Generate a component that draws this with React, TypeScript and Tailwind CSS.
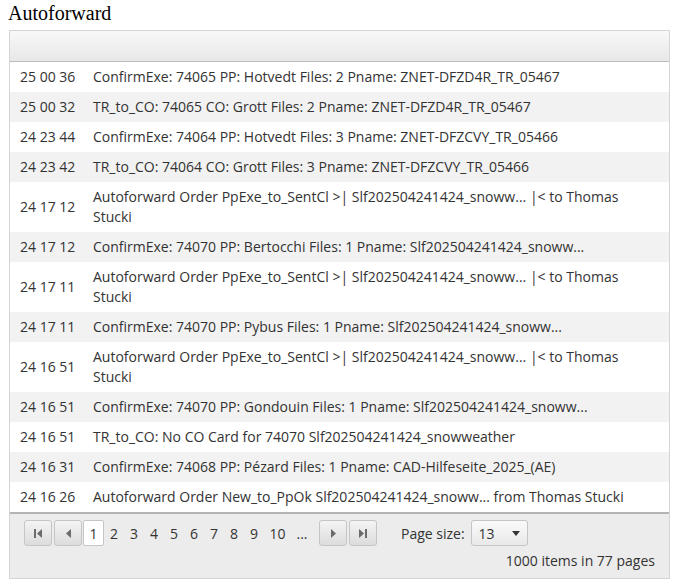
import React from 'react';

type Row = { time: string; text: string };

const rows: Row[] = [
  { time: '25 00 36', text: 'ConfirmExe: 74065 PP: Hotvedt Files: 2 Pname: ZNET-DFZD4R_TR_05467' },
  { time: '25 00 32', text: 'TR_to_CO: 74065 CO: Grott Files: 2 Pname: ZNET-DFZD4R_TR_05467' },
  { time: '24 23 44', text: 'ConfirmExe: 74064 PP: Hotvedt Files: 3 Pname: ZNET-DFZCVY_TR_05466' },
  { time: '24 23 42', text: 'TR_to_CO: 74064 CO: Grott Files: 3 Pname: ZNET-DFZCVY_TR_05466' },
  { time: '24 17 12', text: 'Autoforward Order PpExe_to_SentCl >| Slf202504241424_snoww... |< to Thomas Stucki' },
  { time: '24 17 12', text: 'ConfirmExe: 74070 PP: Bertocchi Files: 1 Pname: Slf202504241424_snoww...' },
  { time: '24 17 11', text: 'Autoforward Order PpExe_to_SentCl >| Slf202504241424_snoww... |< to Thomas Stucki' },
  { time: '24 17 11', text: 'ConfirmExe: 74070 PP: Pybus Files: 1 Pname: Slf202504241424_snoww...' },
  { time: '24 16 51', text: 'Autoforward Order PpExe_to_SentCl >| Slf202504241424_snoww... |< to Thomas Stucki' },
  { time: '24 16 51', text: 'ConfirmExe: 74070 PP: Gondouin Files: 1 Pname: Slf202504241424_snoww...' },
  { time: '24 16 51', text: 'TR_to_CO: No CO Card for 74070 Slf202504241424_snowweather' },
  { time: '24 16 31', text: 'ConfirmExe: 74068 PP: Pézard Files: 1 Pname: CAD-Hilfeseite_2025_(AE)' },
  { time: '24 16 26', text: 'Autoforward Order New_to_PpOk Slf202504241424_snoww... from Thomas Stucki' },
];

function PagerButton({ children }: { children: React.ReactNode }) {
  return (
    <button className="flex h-[26px] w-[28px] items-center justify-center rounded-[3px] border border-[#c5c5c5] bg-gradient-to-b from-[#f4f4f4] to-[#dcdcdc] text-[#6b6b6b]">
      {children}
    </button>
  );
}

function Tri({ dir }: { dir: 'left' | 'right' }) {
  return (
    <svg width="5" height="9" viewBox="0 0 5 9" fill="currentColor">
      {dir === 'left' ? <path d="M5 0v9L0 4.5z" /> : <path d="M0 0v9l5-4.5z" />}
    </svg>
  );
}

export default function App() {
  return (
    <div
      className="min-h-[583px] bg-white pl-[8px] text-[#333]"
      style={{ fontFamily: '"Open Sans", "Noto Sans", sans-serif' }}
    >
      <h2
        className="h-[24px] pt-[1px] text-[20px] leading-[24px] text-black"
        style={{ fontFamily: '"Liberation Serif", serif' }}
      >
        Autoforward
      </h2>

      <div className="ml-[1px] mt-[6px] w-[661px] border border-[#d5d5d5] text-[14px]">
        {/* header */}
        <div className="h-[31px] border-b border-[#bdbdbd] bg-gradient-to-b from-[#f8f8f8] to-[#e8e8e8]" />

        {/* rows */}
        <div>
          {rows.map((r, i) => (
            <div
              key={i}
              className={`flex py-[5px] leading-[20px] ${i % 2 === 1 ? 'bg-[#f2f2f2]' : 'bg-white'}`}
            >
              <div className="flex w-[83px] shrink-0 items-center pl-[10px]">{r.time}</div>
              <div className="flex-1 pr-[30px]">{r.text}</div>
            </div>
          ))}
        </div>

        {/* pager */}
        <div className="h-[66px] border-t-2 border-[#b4b4b4] bg-[#ececec] px-[14px] pt-[6px]">
          <div className="flex h-[26px] items-center">
            <div className="flex gap-[2px]">
              <PagerButton>
                <span className="flex items-center gap-[1px]">
                  <span className="h-[9px] w-[2px] bg-current" />
                  <Tri dir="left" />
                </span>
              </PagerButton>
              <PagerButton>
                <Tri dir="left" />
              </PagerButton>
            </div>
            <div className="ml-[1px] flex h-[26px] w-[21px] items-center justify-center rounded-[2px] border border-[#c5c5c5] bg-white">
              1
            </div>
            {['2', '3', '4', '5', '6', '7', '8', '9'].map((n) => (
              <span key={n} className="w-[20px] text-center">
                {n}
              </span>
            ))}
            <span className="w-[27px] text-center">10</span>
            <span className="w-[22px] text-center">...</span>
            <div className="ml-[6px] flex gap-[2px]">
              <PagerButton>
                <Tri dir="right" />
              </PagerButton>
              <PagerButton>
                <span className="flex items-center gap-[1px]">
                  <Tri dir="right" />
                  <span className="h-[9px] w-[2px] bg-current" />
                </span>
              </PagerButton>
            </div>
            <span className="ml-[24px]">Page size:</span>
            <div className="ml-[6px] flex h-[26px] w-[57px] items-center justify-between rounded-[3px] border border-[#c5c5c5] bg-gradient-to-b from-[#fafafa] to-[#e9e9e9] pl-[7px] pr-[7px]">
              <span>13</span>
              <svg width="8" height="5" viewBox="0 0 8 5" fill="#333">
                <path d="M0 0h8L4 5z" />
              </svg>
            </div>
          </div>
          <div className="mt-[5px] text-right leading-[20px]">1000 items in 77 pages</div>
        </div>
      </div>
    </div>
  );
}
